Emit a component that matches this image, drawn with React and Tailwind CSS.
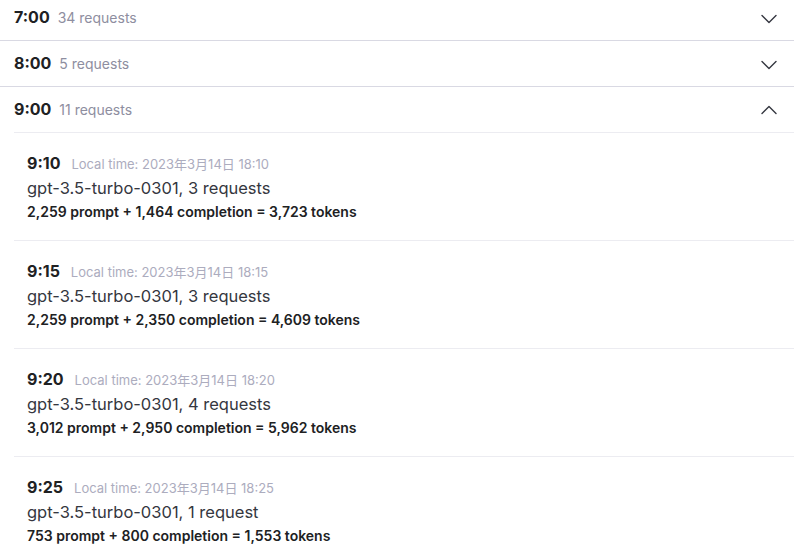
import { ChevronDown, ChevronUp } from "lucide-react";

const hours = [
  { time: "7:00", count: "34 requests", open: false },
  { time: "8:00", count: "5 requests", open: false },
  { time: "9:00", count: "11 requests", open: true },
];

const entries = [
  {
    time: "9:10",
    local: "Local time: 2023年3月14日 18:10",
    model: "gpt-3.5-turbo-0301, 3 requests",
    tokens: "2,259 prompt + 1,464 completion = 3,723 tokens",
  },
  {
    time: "9:15",
    local: "Local time: 2023年3月14日 18:15",
    model: "gpt-3.5-turbo-0301, 3 requests",
    tokens: "2,259 prompt + 2,350 completion = 4,609 tokens",
  },
  {
    time: "9:20",
    local: "Local time: 2023年3月14日 18:20",
    model: "gpt-3.5-turbo-0301, 4 requests",
    tokens: "3,012 prompt + 2,950 completion = 5,962 tokens",
  },
  {
    time: "9:25",
    local: "Local time: 2023年3月14日 18:25",
    model: "gpt-3.5-turbo-0301, 1 request",
    tokens: "753 prompt + 800 completion = 1,553 tokens",
  },
];

const Entry = ({ item }) => (
  <div className="border-b border-[#ececf1] pl-[13px] pt-[19px] pb-[18px]">
    <div className="flex items-baseline gap-[11px] h-[22px]">
      <span className="text-[16px] font-bold text-[#202123] leading-[22px]">
        {item.time}
      </span>
      <span className="text-[13px] text-[#acacbe] leading-[22px]">
        {item.local}
      </span>
    </div>
    <div className="mt-[2px] text-[16.5px] leading-[24px] text-[#353740]">
      {item.model}
    </div>
    <div className="mt-[2px] text-[14px] font-semibold leading-[20px] text-[#202123]">
      {item.tokens}
    </div>
  </div>
);

export default function App() {
  return (
    <div
      className="w-[800px] h-[555px] overflow-hidden bg-white pr-[6px]"
      style={{ fontFamily: "Inter, 'Noto Sans CJK SC', sans-serif" }}
    >
      <div className="-mt-[5px]">
        {hours.map((h) => (
          <div key={h.time}>
            <div
              className={`flex items-center justify-between pl-[14px] pr-[18px] ${
                h.open ? "h-[45px]" : "h-[46px] border-b border-[#d9d9e3]"
              }`}
            >
              <div className="flex items-baseline gap-[8px] -mt-[2px]">
                <span className="text-[16px] font-bold text-[#202123]">
                  {h.time}
                </span>
                <span className="text-[14px] text-[#8e8ea0]">{h.count}</span>
              </div>
              {h.open ? (
                <ChevronUp size={28} strokeWidth={1.2} className="text-[#353740] -mr-[7px]" />
              ) : (
                <ChevronDown size={28} strokeWidth={1.2} className="text-[#353740] -mr-[7px] mt-[3px]" />
              )}
            </div>
            {h.open && (
              <div className="ml-[14px] border-t border-[#ececf1]">
                {entries.map((e) => (
                  <Entry key={e.time} item={e} />
                ))}
              </div>
            )}
          </div>
        ))}
      </div>
    </div>
  );
}
